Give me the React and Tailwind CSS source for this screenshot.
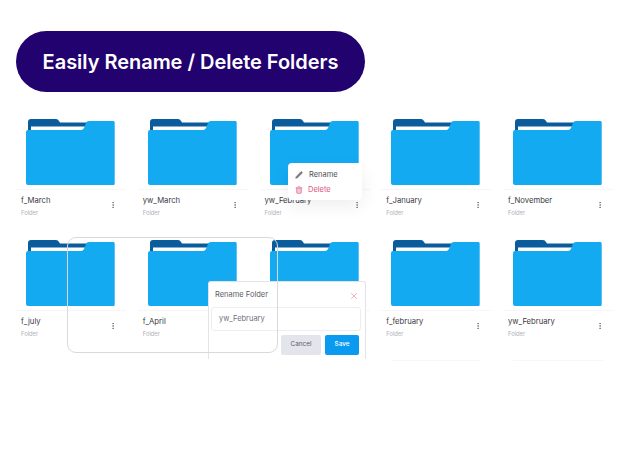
import React from "react";
import { Pencil, Trash2, X, EllipsisVertical } from "lucide-react";

function Folder() {
  return (
    <svg width="90" height="67" viewBox="0 0 90 67" className="block ml-[10px]">
      <path d="M2 3 Q2 0 5 0 L30 0 Q32 0 33 2 L34 3.500 L84 3.500 L84 20 L2 20 Z" fill="#0a5c9c" />
      <path d="M5 7.500 L62 7.500 L58 12 L5 12 Z" fill="#ffffff" />
      <path d="M0 13 Q0 11 2 11 L55 11 Q57 11 58 9 L60 4 Q60.500 2 63 2 L87.500 2 Q88.700 2 88.700 3.500 L88.700 64.500 Q88.700 66 87.500 66 L2 66 Q0 66 0 64 Z" fill="#14aaf2" />
    </svg>
  );
}

function Card({ name, foot }) {
  return (
    <div className="relative w-[110px] h-[121px]">
      <Folder />
      <div className="mt-[3px] border-t border-[#f6f6f8] pl-[5px] pr-[9px] pt-[5px] flex items-start justify-between">
        <div>
          <div className="text-[7.700px] leading-[11px] text-[#3a3a44]">{name}</div>
          <div className="text-[5.800px] leading-[9px] mt-[2px] text-[#b0b0b8]">Folder</div>
        </div>
        <EllipsisVertical size={8} strokeWidth={2.200} className="mt-[6px] text-[#66666f]" />
      </div>
      {foot && <div className="absolute left-[10px] right-[10px] top-[120px] h-px bg-[#f7f7f8]" />}
    </div>
  );
}

const names = ["f_March", "yw_March", "yw_February", "f_January", "f_November", "f_july", "f_April", "yw_February", "f_february", "yw_February"];

export default function App() {
  return (
    <div className="relative w-[630px] h-[464px] bg-white overflow-hidden pt-[31px] pl-[16px] font-['Inter',sans-serif]">
      <div className="w-[349px] h-[61px] rounded-full bg-[#22026e] flex items-center justify-center text-white font-semibold text-[20px] tracking-[-0.03px]">
        Easily Rename / Delete Folders
      </div>
      <div className="mt-[27px] grid grid-cols-[repeat(5,121.750px)]">
        {names.map((n, i) => (
          <Card key={i} name={n} foot={i >= 8} />
        ))}
      </div>

      <div className="absolute left-[288px] top-[163px] w-[74px] h-[37px] bg-white rounded-[4px] shadow-[0_6px_18px_rgba(0,0,0,0.07)] pl-[7px] pt-[5px] text-[7.500px]">
        <div className="flex items-center h-[13px] gap-[5px] text-[#4c4c56]">
          <Pencil size={8} fill="#77777f" strokeWidth={1.400} className="text-[#77777f]" />
          <span className="ml-[1px]">Rename</span>
        </div>
        <div className="flex items-center h-[13px] mt-[2px] gap-[5px] text-[#dc5584]">
          <Trash2 size={8} fill="#f6c3d4" className="text-[#e0668f]" />
          <span>Delete</span>
        </div>
      </div>

      <div className="absolute left-[208px] top-[281px] w-[158px] h-[78px] bg-white border-x border-t border-[#e4e4e8] rounded-t-[3px] pl-[2px] pr-[4px]">
        <div className="flex items-center justify-between h-[25px] pl-[4px] pr-[2px] pt-[1px]">
          <span className="text-[7.500px] text-[#5c5c66]">Rename Folder</span>
          <X size={10} strokeWidth={1.600} className="text-[#f08a9c] mt-[2px]" />
        </div>
        <div className="w-[150px] h-[24px] border border-[#eeeef1] rounded-[3px] flex items-center pl-[7px] text-[7.500px] text-[#70707a]">
          yw_February
        </div>
        <div className="flex justify-end gap-[4px] mt-[4px] pr-[2px]">
          <div className="w-[40px] h-[20px] rounded-[2px] bg-[#e3e4ec] flex items-center justify-center text-[6.400px] text-[#5c5c66]">Cancel</div>
          <div className="w-[34px] h-[20px] rounded-[2px] bg-[#0a9bf0] flex items-center justify-center text-[6.400px] text-white font-medium">Save</div>
        </div>
      </div>

      <div className="absolute left-[67px] top-[237px] w-[211px] h-[116px] rounded-[9px] border border-[#d9d9dc]" />
    </div>
  );
}
